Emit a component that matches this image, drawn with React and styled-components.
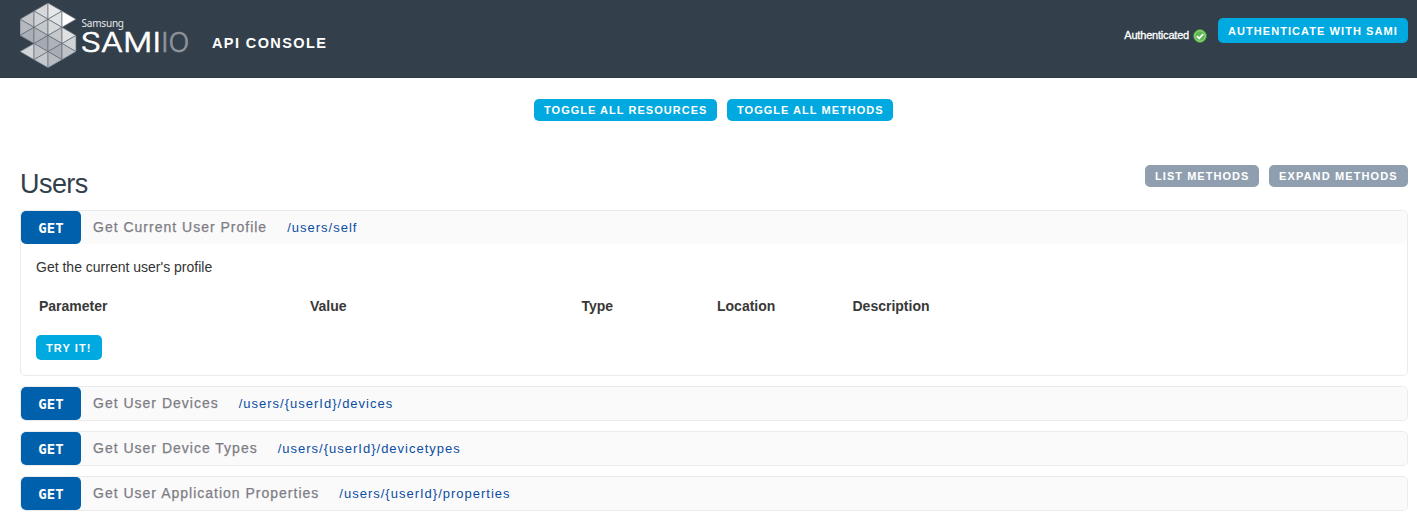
import React from 'react';
import styled, { createGlobalStyle } from 'styled-components';

const GlobalStyle = createGlobalStyle`
  * { box-sizing: border-box; }
  body {
    margin: 0;
    background: #fff;
    color: #333;
    font-family: "Liberation Sans", Arial, sans-serif;
  }
`;

const Page = styled.div`
  height: 519px;
  overflow: hidden;
`;

const Header = styled.header`
  display: flex;
  align-items: flex-start;
  height: 78px;
  padding: 0 9px 0 20px;
  background: #333f4b;
  border-bottom: 1px solid #303a46;
`;

const LogoSvg = styled.svg`
  display: block;
  width: 172px;
  height: 72px;
  flex: none;
`;

const Title = styled.h1`
  margin: 35px auto 0 20px;
  color: #fff;
  font-size: 14.5px;
  line-height: 17px;
  font-weight: bold;
  letter-spacing: 1.4px;
`;

const AuthStatus = styled.div`
  display: flex;
  align-items: center;
  gap: 4px;
  margin: 28px 11px 0 0;
  color: #fff;
  font-size: 11px;
  line-height: 15px;
  letter-spacing: -0.2px;
  -webkit-text-stroke: 0.3px #fff;
`;

const Button = styled.button`
  flex: none;
  height: ${(p) => (p.$tall ? 25 : 22)}px;
  width: ${(p) => p.$width}px;
  margin: 0;
  padding: ${(p) => (p.$tall ? 1 : 0)}px 0 0 10px;
  border: 0;
  border-radius: 5px;
  background: ${(p) => (p.$muted ? '#909fb0' : '#00a9e0')};
  color: #fff;
  font: bold 11px/${(p) => (p.$tall ? 24 : 22)}px "Liberation Sans", Arial, sans-serif;
  letter-spacing: ${(p) => p.$spacing || 1}px;
  text-align: left;
  white-space: nowrap;
`;

const HeaderAction = styled.div`
  display: flex;
  padding-top: 18px;
`;

const ToggleBar = styled.div`
  display: flex;
  justify-content: center;
  gap: 10px;
  padding: 21px 0 0 10px;
`;

const Resource = styled.section`
  padding: 44px 9px 0 20px;
`;

const ResourceHead = styled.div`
  display: flex;
  gap: 10px;
  height: 45px;
`;

const ResourceName = styled.h2`
  margin: 4px auto 0 0;
  color: #333f4b;
  font-size: 27px;
  line-height: 31px;
  font-weight: normal;
  letter-spacing: -0.55px;
`;

const Method = styled.article`
  margin-bottom: 10px;
  border: 1px solid #ebebeb;
  border-radius: 5px;
`;

const MethodHead = styled.div`
  display: flex;
  align-items: center;
  height: 33px;
  border-radius: 5px;
  background: #fafafa;
`;

const Verb = styled.span`
  width: 60px;
  height: 33px;
  border-radius: 5px;
  background: #0060ab;
  color: #fff;
  font: bold 14px/34px "DejaVu Sans Mono", monospace;
  text-align: center;
`;

const MethodName = styled.span`
  margin: -2px 0 0 12px;
  color: #7d7d85;
  font-size: 14px;
  letter-spacing: 1px;
  -webkit-text-stroke: 0.25px #7d7d85;
`;

const Path = styled.span`
  margin: -1px 0 0 20px;
  color: #0b4da2;
  font-size: 13px;
  letter-spacing: 1px;
`;

const MethodBody = styled.div`
  height: 131px;
  padding: 15px;
`;

const Summary = styled.p`
  margin: 0;
  font-size: 14px;
  line-height: 16px;
`;

const ParamHead = styled.div`
  display: grid;
  grid-template-columns: 271px 271.5px 135.5px 135.5px 1fr;
  margin: 23px 0 21px;
  padding-left: 3px;
  color: #383838;
  font-size: 14px;
  line-height: 16px;
  font-weight: bold;
`;

const U = 16.2;
const X = [0, 14, 28, 42, 56];
const even = (i) => 3 + i * U;
const odd = (i) => 11.1 + i * U;
const tri = (a, b, c) => [a, b, c].map((p) => p.join(',')).join(' ');

const FACETS = [
  [tri([X[2], even(0)], [X[2], even(1)], [X[1], odd(0)]), '#d6d8db'],
  [tri([X[2], even(0)], [X[3], odd(0)], [X[2], even(1)]), '#e6e7e8'],
  [tri([X[1], odd(0)], [X[0], even(1)], [X[1], odd(1)]), '#c2c5c9'],
  [tri([X[1], odd(0)], [X[2], even(1)], [X[1], odd(1)]), '#d0d2d5'],
  [tri([X[3], odd(0)], [X[3], odd(1)], [X[2], even(1)]), '#e1e2e4'],
  [tri([X[3], odd(0)], [X[4], even(1)], [X[3], odd(1)]), '#ffffff'],
  [tri([X[0], even(1)], [X[1], odd(1)], [X[0], even(2)]), '#b5b8be'],
  [tri([X[0], even(2)], [X[1], odd(1)], [X[1], odd(2)]), '#aaaeb6'],
  [tri([X[1], odd(1)], [X[2], even(1)], [X[2], even(2)]), '#c4c7cb'],
  [tri([X[1], odd(1)], [X[2], even(2)], [X[1], odd(2)]), '#b0b4bb'],
  [tri([X[2], even(1)], [X[3], odd(1)], [X[2], even(2)]), '#d6d8da'],
  [tri([X[3], odd(1)], [X[3], odd(2)], [X[2], even(2)]), '#c5c7ca'],
  [tri([X[3], odd(1)], [X[4], even(2)], [X[3], odd(2)]), '#e0e1e3'],
  [tri([X[2], even(2)], [X[2], even(3)], [X[1], odd(2)]), '#a5a9b2'],
  [tri([X[2], even(2)], [X[3], odd(2)], [X[2], even(3)]), '#aeb2b9'],
  [tri([X[4], even(2)], [X[4], even(3)], [X[3], odd(2)]), '#d0d2d6'],
  [tri([X[1], odd(2)], [X[0], even(3)], [X[1], odd(3)]), '#d2d4d7'],
  [tri([X[1], odd(2)], [X[2], even(3)], [X[1], odd(3)]), '#c0c3c8'],
  [tri([X[3], odd(2)], [X[3], odd(3)], [X[2], even(3)]), '#a7abb3'],
  [tri([X[3], odd(2)], [X[4], even(3)], [X[3], odd(3)]), '#bfc2c7'],
  [tri([X[2], even(3)], [X[2], even(4)], [X[1], odd(3)]), '#c5c8cc'],
  [tri([X[2], even(3)], [X[3], odd(3)], [X[2], even(4)]), '#b8bbc1'],
];

const Logo = () => (
  <LogoSvg viewBox="0 0 172 72" role="img" aria-label="Samsung SAMI IO">
    <g stroke="#66707a" strokeWidth="0.7" strokeLinejoin="round">
      {FACETS.map(([points, fill]) => (
        <polygon key={points} points={points} fill={fill} />
      ))}
    </g>
    <text x="61.5" y="26.5" fill="#e8eaec" fontFamily="Noto Sans, sans-serif" fontSize="10" textLength="42.5">
      Samsung
    </text>
    <g fontFamily="Inter, sans-serif" fontSize="26.5" fontWeight="300" strokeWidth="0.6">
      <text x="60.5" y="51.6" fill="#fff" stroke="#fff" textLength="80.5" lengthAdjust="spacingAndGlyphs">SAMI</text>
      <text x="141.2" y="51.6" fill="#8d949c" stroke="#8d949c" textLength="28" lengthAdjust="spacingAndGlyphs">IO</text>
    </g>
  </LogoSvg>
);

const CheckBadge = () => (
  <svg width="14" height="14" viewBox="0 0 14 14" style={{ display: 'block' }}>
    <circle cx="7" cy="7" r="6.4" fill="#5cb850" stroke="#3f9a38" strokeWidth="0.9" />
    <circle cx="7" cy="7" r="5.3" fill="none" stroke="#a5d99a" strokeWidth="0.9" />
    <path d="M3.9 7.2 6.2 9.4 10.2 5" fill="none" stroke="#fff" strokeWidth="1.8" />
  </svg>
);

const METHODS = [
  { name: 'Get Current User Profile', path: '/users/self', open: true },
  { name: 'Get User Devices', path: '/users/{userId}/devices' },
  { name: 'Get User Device Types', path: '/users/{userId}/devicetypes' },
  { name: 'Get User Application Properties', path: '/users/{userId}/properties' },
];

const COLUMNS = ['Parameter', 'Value', 'Type', 'Location', 'Description'];

export default function App() {
  return (
    <Page>
      <GlobalStyle />
      <Header>
        <Logo />
        <Title>API CONSOLE</Title>
        <AuthStatus>
          Authenticated
          <CheckBadge />
        </AuthStatus>
        <HeaderAction>
          <Button $tall $width={190} $spacing={1.06}>AUTHENTICATE WITH SAMI</Button>
        </HeaderAction>
      </Header>
      <ToggleBar>
        <Button $width={183} $spacing={1.03}>TOGGLE ALL RESOURCES</Button>
        <Button $width={166} $spacing={1.03}>TOGGLE ALL METHODS</Button>
      </ToggleBar>
      <Resource>
        <ResourceHead>
          <ResourceName>Users</ResourceName>
          <Button $muted $width={114} $spacing={1.05}>LIST METHODS</Button>
          <Button $muted $width={139} $spacing={1.12}>EXPAND METHODS</Button>
        </ResourceHead>
        {METHODS.map((m) => (
          <Method key={m.path}>
            <MethodHead>
              <Verb>GET</Verb>
              <MethodName>{m.name}</MethodName>
              <Path>{m.path}</Path>
            </MethodHead>
            {m.open && (
              <MethodBody>
                <Summary>Get the current user's profile</Summary>
                <ParamHead>
                  {COLUMNS.map((c) => (
                    <span key={c}>{c}</span>
                  ))}
                </ParamHead>
                <Button $tall $width={66} $spacing={1.1}>TRY IT!</Button>
              </MethodBody>
            )}
          </Method>
        ))}
      </Resource>
    </Page>
  );
}
